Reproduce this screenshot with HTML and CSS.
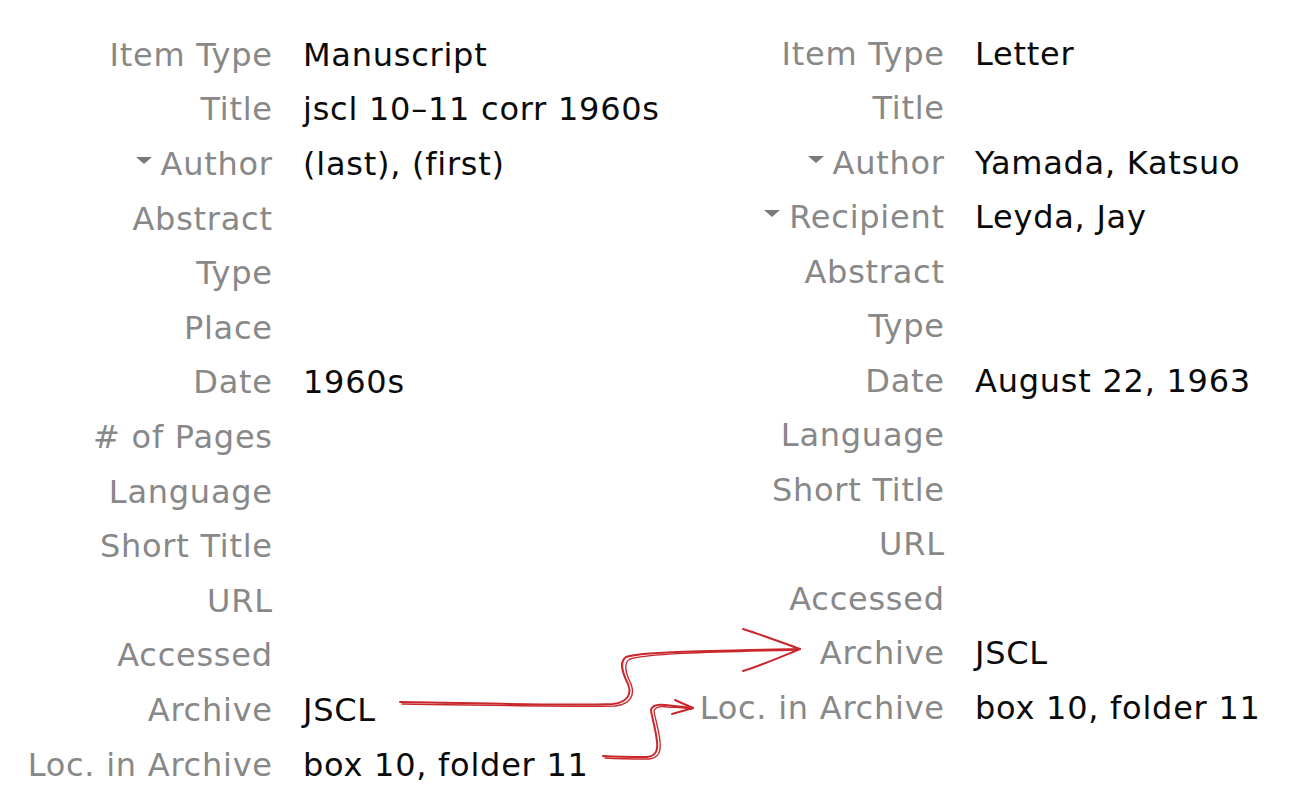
FILE: index.html
```html
<!DOCTYPE html>
<html>
<head>
<meta charset="utf-8">
<link rel="stylesheet" href="styles.css">
</head>
<body>
<div class="page">
  <dl class="panel panel-left">
    <dt>Item Type</dt><dd>Manuscript</dd>
    <dt>Title</dt><dd>jscl 10–11 corr 1960s</dd>
    <dt><span class="tri"></span>Author</dt><dd>(last), (first)</dd>
    <dt>Abstract</dt><dd></dd>
    <dt>Type</dt><dd></dd>
    <dt>Place</dt><dd></dd>
    <dt>Date</dt><dd>1960s</dd>
    <dt># of Pages</dt><dd></dd>
    <dt>Language</dt><dd></dd>
    <dt>Short Title</dt><dd></dd>
    <dt>URL</dt><dd></dd>
    <dt>Accessed</dt><dd></dd>
    <dt>Archive</dt><dd>JSCL</dd>
    <dt>Loc. in Archive</dt><dd>box 10, folder 11</dd>
  </dl>
  <dl class="panel panel-right">
    <dt>Item Type</dt><dd>Letter</dd>
    <dt>Title</dt><dd></dd>
    <dt><span class="tri"></span>Author</dt><dd>Yamada, Katsuo</dd>
    <dt><span class="tri"></span>Recipient</dt><dd>Leyda, Jay</dd>
    <dt>Abstract</dt><dd></dd>
    <dt>Type</dt><dd></dd>
    <dt>Date</dt><dd>August 22, 1963</dd>
    <dt>Language</dt><dd></dd>
    <dt>Short Title</dt><dd></dd>
    <dt>URL</dt><dd></dd>
    <dt>Accessed</dt><dd></dd>
    <dt>Archive</dt><dd>JSCL</dd>
    <dt>Loc. in Archive</dt><dd>box 10, folder 11</dd>
  </dl>
  <svg class="arrows" width="1313" height="808" viewBox="0 0 1313 808" fill="none" stroke="#c9272b" stroke-linecap="round" stroke-linejoin="round">
    <path d="M400 702 C480 703 560 706 613 704 C628 702 632 694 628 684 C622 672 619 662 626 657 C640 652 700 651 800 649" stroke-width="2"/>
    <path d="M402 704 C482 705 562 707 615 706 C631 704 635 695 631 684 C625 672 623 663 630 659 C645 654 700 652 798 650" stroke-width="1.4"/>
    <path d="M743 629 C765 636 783 643 800 649 C783 656 765 664 743 671" stroke-width="2"/>
    <path d="M603 756 C620 757 635 757 647 757 C656 756 658 750 657 742 C656 730 652 718 651 710 C652 705 657 704 665 705 C675 706 684 707 693 708" stroke-width="2"/>
    <path d="M605 758 C621 759 636 759 649 759 C659 758 661 751 660 742 C659 730 655 718 654 711 C655 707 660 706 667 707 C677 707 685 708 692 709" stroke-width="1.3"/>
    <path d="M675 700 C682 703 688 706 693 708 C686 710 679 712 672 714" stroke-width="2"/>
  </svg>
</div>
</body>
</html>
```

FILE: styles.css
```css
html, body {
  margin: 0;
  padding: 0;
  background: #ffffff;
}

.page {
  position: relative;
  width: 1313px;
  height: 808px;
  display: flex;
  font-family: "DejaVu Sans", "Verdana", sans-serif;
  font-size: 32px;
  letter-spacing: 0.75px;
}

.panel {
  margin: 0;
  display: grid;
  grid-template-columns: 272px 1fr;
  column-gap: 31px;
  align-items: center;
}

.panel-left {
  width: 672px;
  padding-top: 27.7px;
  grid-auto-rows: 54.6px;
}

.panel-right {
  width: 641px;
  padding-top: 26.8px;
  grid-auto-rows: 54.5px;
}

.panel dt {
  color: #888888;
  text-align: right;
  white-space: nowrap;
  line-height: 1.2;
  margin-right: -0.75px;
}

.panel dd {
  margin: 0;
  color: #0a0a0a;
  white-space: nowrap;
  line-height: 1.2;
}

.tri {
  display: inline-block;
  width: 0;
  height: 0;
  border-left: 8px solid transparent;
  border-right: 8px solid transparent;
  border-top: 7px solid #7a7a7a;
  margin-right: 9px;
  vertical-align: 0.34em;
}

.arrows {
  position: absolute;
  left: 0;
  top: 0;
  pointer-events: none;
}
```
